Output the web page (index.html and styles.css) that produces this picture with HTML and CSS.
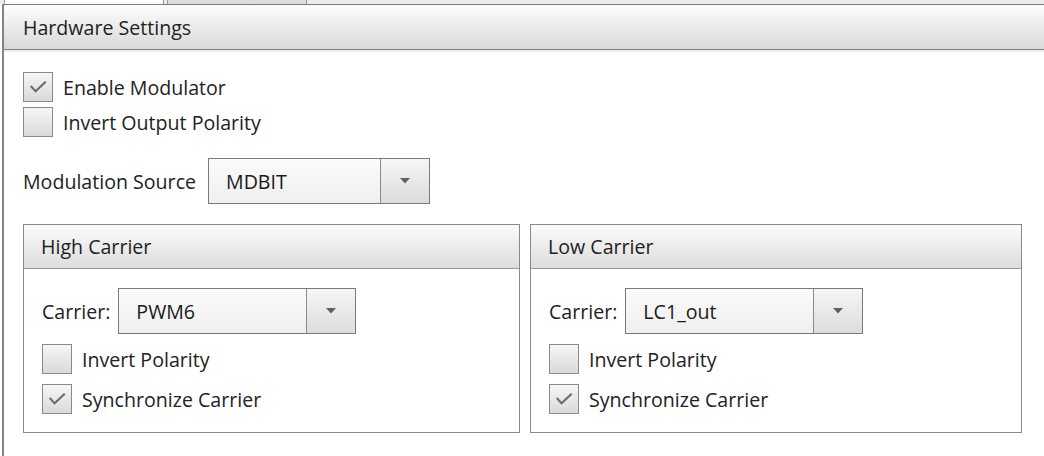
FILE: index.html
```html
<!DOCTYPE html>
<html>
<head>
<meta charset="utf-8">
<link rel="stylesheet" href="styles.css">
</head>
<body>
<div class="window">
  <div class="tabstrip">
    <div class="tab active"></div>
    <div class="tab inactive"></div>
  </div>
  <div class="panel">
    <div class="panel-header">Hardware Settings</div>
    <div class="panel-body">
      <div class="check">
        <span class="box"><svg viewBox="0 0 29 29" width="28" height="28"><polyline points="7,13.5 12,19 22.5,9" /></svg></span>
        <span>Enable Modulator</span>
      </div>
      <div class="check">
        <span class="box"></span>
        <span>Invert Output Polarity</span>
      </div>
      <div class="field top-field">
        <span class="field-label">Modulation Source</span>
        <div class="combo wide">
          <span class="combo-text">MDBIT</span>
          <span class="combo-btn"><svg viewBox="0 0 10 6" width="10" height="6"><polygon points="0,0 10,0 5,5.5" /></svg></span>
        </div>
      </div>
      <div class="groups">
        <section class="group">
          <div class="group-header">High Carrier</div>
          <div class="group-body">
            <div class="field">
              <span class="field-label">Carrier:</span>
              <div class="combo">
                <span class="combo-text">PWM6</span>
                <span class="combo-btn"><svg viewBox="0 0 10 6" width="10" height="6"><polygon points="0,0 10,0 5,5.5" /></svg></span>
              </div>
            </div>
            <div class="check">
              <span class="box"></span>
              <span>Invert Polarity</span>
            </div>
            <div class="check">
              <span class="box"><svg viewBox="0 0 29 29" width="28" height="28"><polyline points="7,13.5 12,19 22.5,9" /></svg></span>
              <span>Synchronize Carrier</span>
            </div>
          </div>
        </section>
        <section class="group">
          <div class="group-header">Low Carrier</div>
          <div class="group-body">
            <div class="field">
              <span class="field-label">Carrier:</span>
              <div class="combo">
                <span class="combo-text">LC1_out</span>
                <span class="combo-btn"><svg viewBox="0 0 10 6" width="10" height="6"><polygon points="0,0 10,0 5,5.5" /></svg></span>
              </div>
            </div>
            <div class="check">
              <span class="box"></span>
              <span>Invert Polarity</span>
            </div>
            <div class="check">
              <span class="box"><svg viewBox="0 0 29 29" width="28" height="28"><polyline points="7,13.5 12,19 22.5,9" /></svg></span>
              <span>Synchronize Carrier</span>
            </div>
          </div>
        </section>
      </div>
    </div>
  </div>
</div>
</body>
</html>
```

FILE: styles.css
```css
html, body {
  margin: 0;
  padding: 0;
  background: #ffffff;
}

body {
  width: 1044px;
  height: 456px;
  overflow: hidden;
  font-family: "Open Sans", "Noto Sans", sans-serif;
  font-size: 19.6px;
  color: #222222;
}

.window {
  height: 456px;
  background: #ffffff;
}

.tabstrip {
  height: 4px;
  display: flex;
  background: #ececec;
  padding-left: 4px;
}

.tab {
  height: 4px;
  box-sizing: border-box;
}

.tab.active {
  width: 160px;
  background: #ffffff;
  border-left: 1px solid #9a9a9a;
  border-right: 1px solid #8a8a8a;
}

.tab.inactive {
  width: 140px;
  margin-left: 3px;
  background: #dedede;
  border-left: 1px solid #9a9a9a;
  border-right: 1px solid #9a9a9a;
}

.panel {
  margin-left: 2px;
  border-left: 2px solid #7c8590;
  height: 452px;
}

.panel-header {
  height: 44px;
  border-top: 1px solid #7a7a7a;
  border-bottom: 1px solid #858585;
  background: linear-gradient(#fdfdfd, #d9d9d9);
  padding-left: 19px;
  display: flex;
  align-items: center;
  box-shadow: 0 2px 0 #eeeeee;
}

.panel-body {
  padding: 22px 22px 0 19px;
}

.check {
  display: flex;
  align-items: center;
  gap: 10px;
  height: 30px;
  margin-bottom: 5px;
}

.box {
  width: 30px;
  height: 30px;
  box-sizing: border-box;
  border: 1px solid #8a8a8a;
  background: linear-gradient(#f6f6f6, #dadada);
  display: flex;
  align-items: center;
  justify-content: center;
  flex: none;
}

.box svg polyline {
  fill: none;
  stroke: #6c6c6c;
  stroke-width: 2.2;
  stroke-linejoin: miter;
}

.field {
  display: flex;
  align-items: center;
  gap: 8px;
}

.top-field {
  margin-top: 21px;
  gap: 12px;
}

.combo {
  width: 238px;
  height: 46px;
  box-sizing: border-box;
  border: 1px solid #7a7a7a;
  background: linear-gradient(#fbfbfb, #efefef);
  display: flex;
}

.combo.wide {
  width: 222px;
}

.combo-text {
  flex: 1;
  padding-left: 17px;
  display: flex;
  align-items: center;
  color: #1a1a1a;
}

.combo-btn {
  width: 48px;
  border-left: 1px solid #8a8a8a;
  background: linear-gradient(#f6f6f6, #dcdcdc);
  display: flex;
  align-items: center;
  justify-content: center;
}

.combo-btn svg polygon {
  fill: #606060;
}

.groups {
  margin-top: 20px;
  display: grid;
  grid-template-columns: 497fr 492fr;
  gap: 10px;
}

.group {
  border: 1px solid #8a8a8a;
  height: 209px;
  box-sizing: border-box;
}

.group-header {
  height: 43px;
  border-bottom: 1px solid #999999;
  background: linear-gradient(#fbfbfb, #dddddd);
  padding-left: 17px;
  display: flex;
  align-items: center;
}

.group-body {
  padding: 19px 18px 0 18px;
}

.group-body .field {
  margin-bottom: 10px;
}

.group-body .check {
  margin-bottom: 10px;
}
```
